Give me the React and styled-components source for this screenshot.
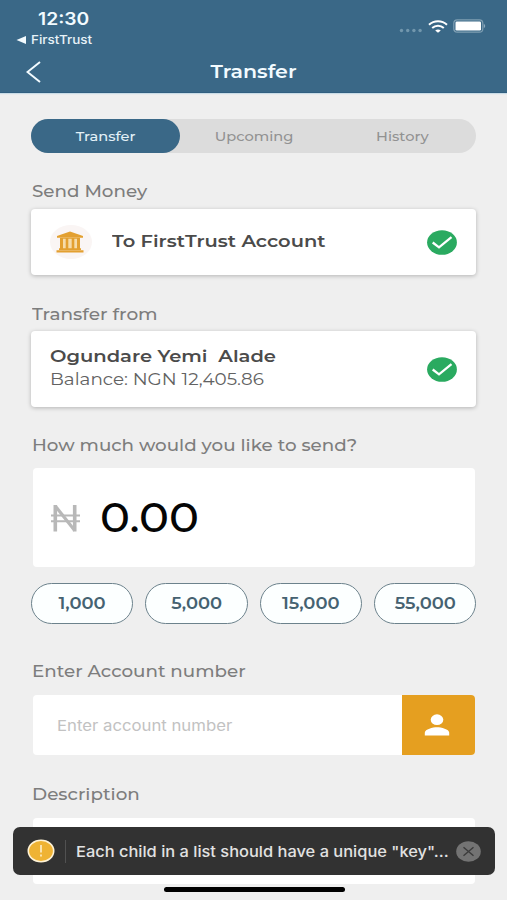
import React from 'react';
import styled, { createGlobalStyle } from 'styled-components';

const GlobalStyle = createGlobalStyle`
  *, *::before, *::after { box-sizing: border-box; }
  html, body { margin: 0; background: #efefef; }
  body { font-family: Montserrat, Inter, sans-serif; overflow: hidden; }
  button { font: inherit; border: 0; padding: 0; margin: 0; background: none; }
`;

const Screen = styled.main`
  position: relative;
  width: 507px;
  height: 900px;
  overflow: hidden;
  background: #efefef;
`;

/* Wide lettering: the glyphs are stretched horizontally from one edge. */
const Text = styled.span`
  display: block;
  white-space: pre;
  font-family: ${(p) => (p.$system ? 'Inter, sans-serif' : 'inherit')};
  font-size: ${(p) => p.$size}px;
  font-weight: ${(p) => p.$weight || 500};
  line-height: ${(p) => p.$line || 24}px;
  color: ${(p) => p.$color || '#7d7d7d'};
  transform: scaleX(${(p) => p.$stretch || 1.143});
  transform-origin: ${(p) => p.$origin || 'left'} center;
`;

const Header = styled.header`
  height: 93px;
  background: #3a6887;
  border-bottom: 1px solid #315f80;
  box-shadow: 0 1px 1px #c9dce6;
`;
const StatusBar = styled.div`
  display: flex;
  justify-content: space-between;
  height: 50px;
  padding: 9px 21px 0 16px;
`;
const Clock = styled.div`
  padding-left: 22px;
`;
const BackToApp = styled.div`
  display: flex;
  align-items: center;
  gap: 4px;
  height: 16px;
  margin-top: 3px;
`;
const StatusIcons = styled.div`
  display: flex;
  align-items: center;
  gap: 5px;
  height: 18px;
  margin-top: 8px;
`;
const NavBar = styled.div`
  display: grid;
  grid-template-columns: 44px 1fr 44px;
  align-items: center;
  height: 43px;
  justify-items: center;
`;
const BackButton = styled.button`
  display: flex;
  justify-self: end;
`;

const Content = styled.section`
  padding: 26px 31px 0;
`;
const Tabs = styled.nav`
  display: grid;
  grid-template-columns: 149px 1fr 1fr;
  height: 34px;
  border-radius: 18px;
  background: #dcdcdc;
`;
const Tab = styled.button`
  display: flex;
  align-items: center;
  justify-content: center;
  border-radius: 18px;
  background: ${(p) => (p.$active ? '#3a6887' : 'transparent')};
`;
const Label = styled.div`
  height: 24px;
  margin: ${(p) => p.$top}px 0 ${(p) => p.$bottom}px 1px;
`;
const Card = styled.div`
  display: flex;
  align-items: center;
  height: ${(p) => p.$height}px;
  padding: 0 19px;
  border-radius: 4px;
  background: #fff;
  box-shadow: 0 1px 4px rgba(0, 0, 0, 0.25);
`;
const CardBody = styled.div`
  flex: 1;
  margin-left: ${(p) => p.$inset || 0}px;
  padding-bottom: 2px;
`;
const BankBadge = styled.span`
  display: grid;
  place-items: center;
  width: 42px;
  height: 34px;
  padding-right: 2px;
  border-radius: 50%;
  background: #faf5f4;
`;
const Field = styled.div`
  display: flex;
  align-items: center;
  height: ${(p) => p.$height}px;
  margin: 0 1px 0 2px;
  padding-left: ${(p) => p.$pad || 0}px;
  border-radius: 4px;
  background: #fff;
  overflow: hidden;
`;
const Amount = styled.div`
  margin-left: 19px;
  padding-bottom: 2px;
`;
const Placeholder = styled.div`
  flex: 1;
  padding-top: 1px;
`;
const ContactButton = styled.button`
  display: grid;
  place-items: center;
  width: 73px;
  height: 100%;
  padding: 0 3px 1px 0;
  background: #e59f20;
`;
const Pills = styled.div`
  display: grid;
  grid-template-columns: repeat(4, 1fr);
  gap: 12px;
  margin-top: 16px;
`;
const Pill = styled.button`
  display: flex;
  align-items: center;
  justify-content: center;
  height: 41px;
  padding-top: 1px;
  border: 1px solid #6c828c;
  border-radius: 21px;
  background: #fcffff;
`;
const Toast = styled.aside`
  position: absolute;
  left: 13px;
  right: 12.500px;
  top: 827px;
  display: flex;
  align-items: center;
  height: 48px;
  padding: 0 14px;
  border-radius: 7px;
  background: #323232;
`;
const Divider = styled.span`
  width: 1px;
  height: 23px;
  margin: 0 10px 0 10px;
  background: #515151;
`;
const Message = styled.div`
  flex: 1;
  padding-top: 1px;
`;
const HomeIndicator = styled.div`
  position: absolute;
  left: 163.500px;
  top: 887px;
  width: 181px;
  height: 5px;
  border-radius: 3px;
  background: #000;
`;

const CheckIcon = () => (
  <svg width="30" height="25" viewBox="0 0 30 25">
    <ellipse cx="15" cy="12.5" rx="14.9" ry="12.3" fill="#2aaa60" />
    <path d="M5.700 12.5 12 17.300 24.500 7.200" fill="none" stroke="#fff" strokeWidth="2.3" />
  </svg>
);
const BankIcon = () => (
  <svg width="28" height="22" viewBox="0 0 28 22" fill="#e3a030">
    <path d="M14 .5 27 4.900V6.800H1V4.900Z" />
    <path d="M4 6.500h20V18H4z" fill="#f6dca9" />
    <path d="M4 6.500h20v1.300H4zM4 7h3v11H4zm5.700 0h2.600v11H9.700zm6 0h2.600v11h-2.600zM21 7h3v11h-3zM3 17.300h22v1.700H3zM.5 19.300h27v2.200H.5z" />
  </svg>
);
const NairaIcon = () => (
  <svg width="31" height="30" viewBox="0 0 31 30" fill="none" stroke="#b8b8b8">
    <path d="M5.300 28.500V2M24.700 28.500V2" strokeWidth="3.6" />
    <path d="M5.300 3 24.700 27.500" strokeWidth="3.2" />
    <path d="M1 12.500h29M1 18.200h29" strokeWidth="1.900" />
  </svg>
);
const PersonIcon = () => (
  <svg width="26" height="22" viewBox="0 0 26 22" fill="#fff">
    <ellipse cx="13" cy="5.7" rx="6.3" ry="5.4" />
    <path d="M.8 21.5v-2.700c0-3.600 8.100-5.500 12.200-5.500s12.200 1.900 12.200 5.500v2.700z" />
  </svg>
);
const SignalIcon = () => (
  <svg width="24" height="13" viewBox="0 0 24 13" fill="#7297ad">
    <circle cx="2.500" cy="10.500" r="1.700" /><circle cx="8.700" cy="10.500" r="1.700" />
    <circle cx="14.900" cy="10.500" r="1.700" /><circle cx="21.100" cy="10.500" r="1.700" />
  </svg>
);
const WifiIcon = () => (
  <svg width="20" height="13" viewBox="0 0 20 13" fill="none" stroke="#fff" strokeWidth="2">
    <path d="M1 4.800C6 .1 14 .1 19 4.800M4.200 7.900c3.300-3 8.300-3 11.600 0" />
    <path d="m7.200 10.400 2.800 2.300 2.800-2.300c-1.600-1.200-4-1.200-5.600 0Z" fill="#fff" stroke="none" />
  </svg>
);
const BatteryIcon = () => (
  <svg width="33" height="14" viewBox="0 0 33 14">
    <rect x=".8" y=".8" width="29" height="12.400" rx="3.500" fill="none" stroke="#7f9fb3" strokeWidth="1.200" />
    <rect x="2.500" y="2.500" width="25.500" height="9" rx="1.300" fill="#fff" />
    <path d="M30.800 5v4c1.800-.5 1.800-3.500 0-4Z" fill="#8ba9bb" />
  </svg>
);
const WarningIcon = () => (
  <svg width="28" height="24" viewBox="0 0 28 24">
    <ellipse cx="14" cy="12" rx="12.700" ry="10.700" fill="#efb334" stroke="#fff3d6" strokeWidth="1.600" />
    <path d="M14 6v7.500M14 15.500v2" stroke="#fff3d6" strokeWidth="1.500" />
  </svg>
);
const CloseIcon = () => (
  <svg width="25" height="21" viewBox="0 0 25 21">
    <ellipse cx="12.500" cy="10.500" rx="12.300" ry="10.200" fill="#737373" />
    <path d="m7.500 6.300 10 8.400m0-8.400-10 8.400" stroke="#3c3c3c" strokeWidth="1.500" />
  </svg>
);

const tabs = ['Transfer', 'Upcoming', 'History'];
const amounts = ['1,000', '5,000', '15,000', '55,000'];

export default function App() {
  return (
    <Screen>
      <GlobalStyle />
      <Header>
        <StatusBar>
          <div>
            <Clock><Text $size={17} $weight={600} $line={20} $stretch={1.133} $system $color="#f2fbff">12:30</Text></Clock>
            <BackToApp>
              <svg width="11" height="8" viewBox="0 0 11 8" fill="#f2fbff"><path d="M.5 4 10 0v8z" /></svg>
              <Text $size={12} $line={16} $stretch={1.122} $system $color="#e7f2f8">FirstTrust</Text>
            </BackToApp>
          </div>
          <StatusIcons>
            <SignalIcon /><WifiIcon /><BatteryIcon />
          </StatusIcons>
        </StatusBar>
        <NavBar>
          <BackButton aria-label="Back">
            <svg width="18" height="22" viewBox="0 0 18 22" fill="none" stroke="#f2fbff" strokeWidth="2"><path d="M14 1 1.500 11 14 21" /></svg>
          </BackButton>
          <Text $size={18} $weight={600} $origin="center" $color="#f2fbff">Transfer</Text>
        </NavBar>
      </Header>
      <Content>
        <Tabs>
          {tabs.map((name, i) => (
            <Tab key={name} $active={i === 0}>
              <Text $size={13} $origin="center" $stretch={1.125} $color={i === 0 ? '#e3f1f8' : '#929292'}>{name}</Text>
            </Tab>
          ))}
        </Tabs>
        <Label $top={27} $bottom={5}><Text $size={16}>Send Money</Text></Label>
        <Card $height={66}>
          <BankBadge><BankIcon /></BankBadge>
          <CardBody $inset={20}><Text $size={17} $weight={600} $color="#4b4b4b">To FirstTrust Account</Text></CardBody>
          <CheckIcon />
        </Card>
        <Label $top={28} $bottom={4}><Text $size={16} $stretch={1.155}>Transfer from</Text></Label>
        <Card $height={76}>
          <CardBody>
            <Text $size={17} $weight={600} $line={23} $stretch={1.148} $color="#4b4b4b">{'Ogundare Yemi  Alade'}</Text>
            <Text $size={16} $weight={400} $line={23} $stretch={1.146} $color="#626262">Balance: NGN 12,405.86</Text>
          </CardBody>
          <CheckIcon />
        </Card>
        <Label $top={27} $bottom={10}><Text $size={16}>How much would you like to send?</Text></Label>
        <Field $height={99} $pad={17}>
          <NairaIcon />
          <Amount><Text $size={41} $weight={500} $line={50} $stretch={1.095} $color="#050505">0.00</Text></Amount>
        </Field>
        <Pills>
          {amounts.map((value) => (
            <Pill key={value}><Text $size={16} $weight={600} $origin="center" $stretch={1.12} $color="#456271">{value}</Text></Pill>
          ))}
        </Pills>
        <Label $top={36} $bottom={11}><Text $size={16}>Enter Account number</Text></Label>
        <Field $height={60} $pad={24}>
          <Placeholder><Text $size={15} $weight={400} $system $stretch={1.115} $color="#c2c2c2">Enter account number</Text></Placeholder>
          <ContactButton aria-label="Choose contact"><PersonIcon /></ContactButton>
        </Field>
        <Label $top={28} $bottom={11}><Text $size={16} $stretch={1.145}>Description</Text></Label>
        <Field $height={66} />
      </Content>
      <Toast>
        <WarningIcon />
        <Divider />
        <Message><Text $size={15} $system $stretch={1.095} $color="#e2e2e2">Each child in a list should have a unique "key"...</Text></Message>
        <CloseIcon />
      </Toast>
      <HomeIndicator />
    </Screen>
  );
}
